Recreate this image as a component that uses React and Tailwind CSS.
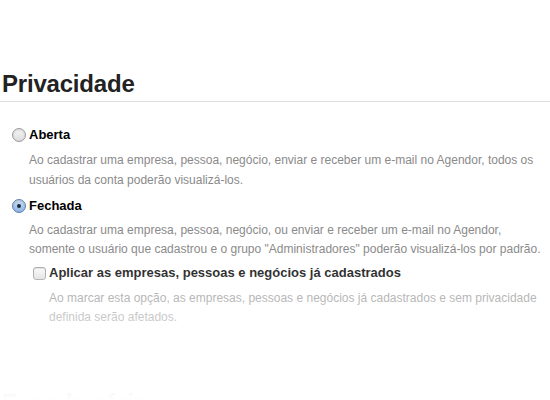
import React, { useState } from "react";

function Radio({ checked }) {
	return (
		<span
			className={`inline-flex h-[14px] w-[14px] shrink-0 items-center justify-center rounded-full border shadow-[inset_0_1px_2px_rgba(0,0,0,0.15)] ${
				checked
					? "border-[#5a7fb0] bg-gradient-to-b from-[#cfe0f5] to-[#8fb4e3]"
					: "border-[#9a9a9a] bg-gradient-to-b from-[#f6f6f6] to-[#dcdcdc]"
			}`}
		>
			{checked && <span className="h-[4px] w-[4px] rounded-full bg-[#1b2a3d]" />}
		</span>
	);
}

export default function App() {
	const [privacy, setPrivacy] = useState("fechada");

	return (
		<div className="relative h-[400px] w-[550px] overflow-hidden bg-white font-['Liberation_Sans',Arial,sans-serif]">
			<div className="pt-[70px]">
				<h2 className="border-b border-[#dddddd] pb-[3px] pl-[2px] text-[24px] font-bold leading-[28px] tracking-[-0.2px] text-[#222]">
					Privacidade
				</h2>

				<div className="pl-[12px] pt-[25px]">
					<label
						className="flex cursor-pointer items-center gap-[3px]"
						onClick={() => setPrivacy("aberta")}
					>
						<Radio checked={privacy === "aberta"} />
						<span className="text-[13px] font-bold leading-[16px] text-black">Aberta</span>
					</label>
					<p className="mt-[7px] pl-[17px] text-[12px] leading-[20px] text-[#8a8a8a]">
						Ao cadastrar uma empresa, pessoa, negócio, enviar e receber um e-mail no Agendor, todos os
						usuários da conta poderão visualizá-los.
					</p>

					<label
						className="mt-[8px] flex cursor-pointer items-center gap-[3px]"
						onClick={() => setPrivacy("fechada")}
					>
						<Radio checked={privacy === "fechada"} />
						<span className="text-[13px] font-bold leading-[16px] text-black">Fechada</span>
					</label>
					<p className="mt-[7px] pl-[17px] text-[12px] leading-[19px] text-[#8a8a8a]">
						Ao cadastrar uma empresa, pessoa, negócio, ou enviar e receber um e-mail no Agendor,
						<br />
						somente o usuário que cadastrou e o grupo "Administradores" poderão visualizá-los por padrão.
					</p>

					<div className="pl-[21px] pt-[6px]">
						<label className="flex cursor-pointer items-center gap-[3px]">
							<span className="h-[13px] w-[13px] shrink-0 rounded-[3px] border border-[#a0a0a0] bg-gradient-to-b from-[#fafafa] to-[#dedede] shadow-[inset_0_1px_1px_rgba(0,0,0,0.1)]" />
							<span className="text-[13px] font-bold leading-[16px] text-black">
								Aplicar as empresas, pessoas e negócios já cadastrados
							</span>
						</label>
						<p className="mt-[8px] pl-[16px] text-[12px] leading-[19px] text-[#8a8a8a]">
							Ao marcar esta opção, as empresas, pessoas e negócios já cadastrados e sem privacidade
							<br />
							definida serão afetados.
						</p>
					</div>
				</div>

				<h2 className="mt-[62px] pl-[2px] text-[24px] font-bold leading-[28px] text-[#222]">
					Fuso horário
				</h2>
			</div>

			{/* fade at the bottom */}
			<div className="pointer-events-none absolute inset-x-0 bottom-0 h-[150px] bg-gradient-to-b from-white/0 via-white/60 to-white" />
		</div>
	);
}
